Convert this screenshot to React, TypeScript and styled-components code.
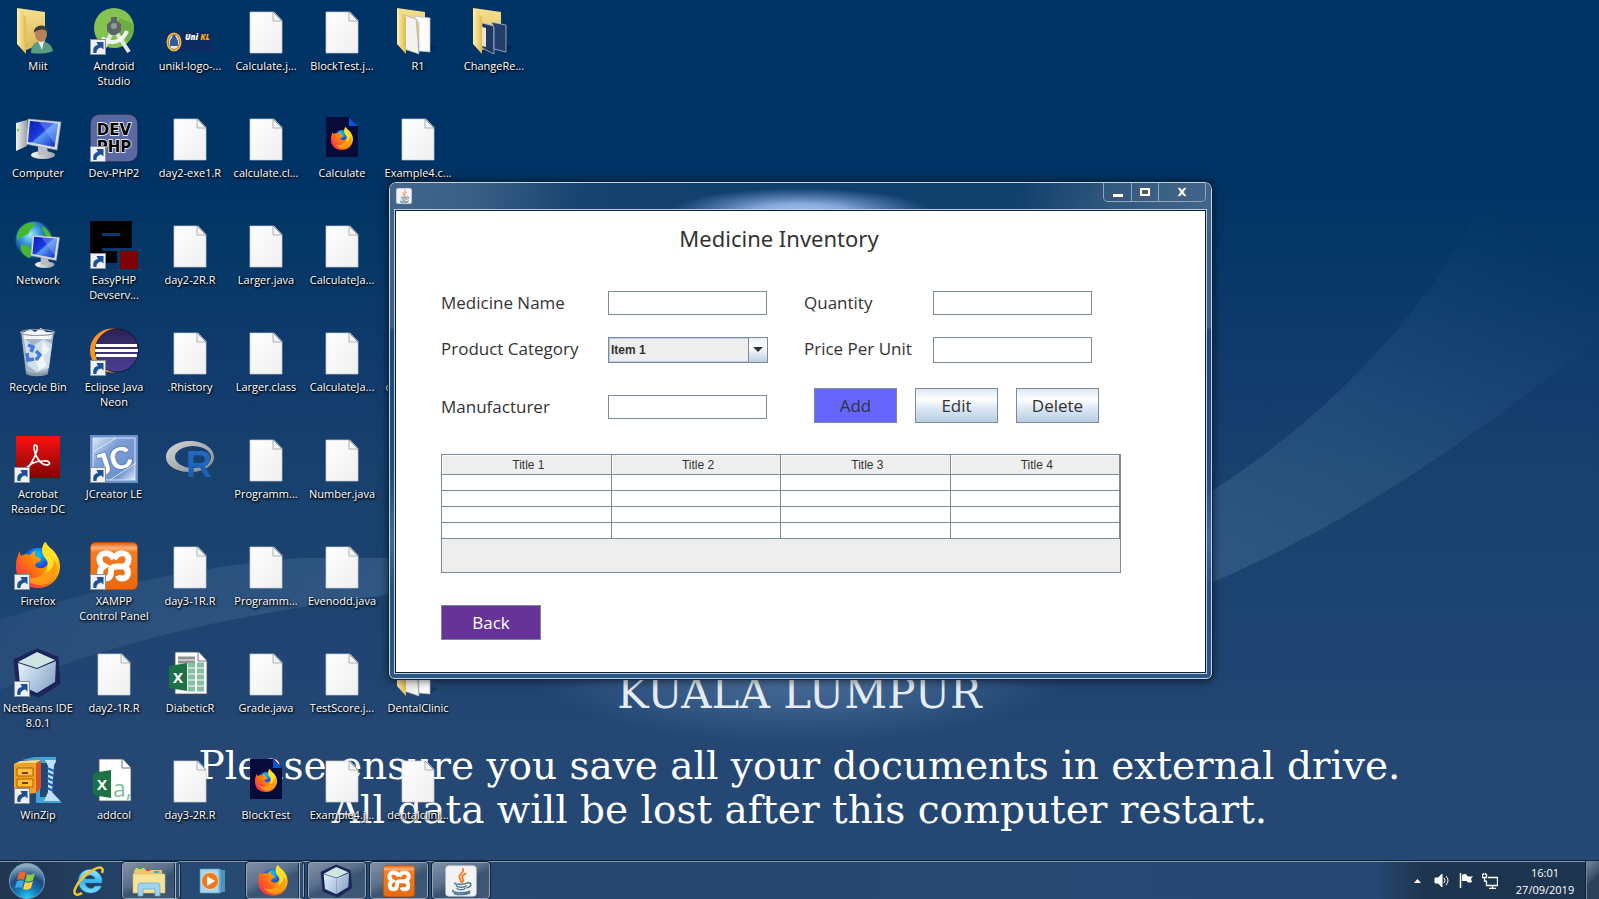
import React from "react";
import styled, { createGlobalStyle, css } from "styled-components";

const UI = `"Open Sans", "Noto Sans", sans-serif`;
const SWING = `"Liberation Sans", Arial, sans-serif`;
const EDGE = "#7a8a99";

const GlobalStyle = createGlobalStyle`
  *, *::before, *::after { box-sizing: border-box; }
  body { margin: 0; background: #003366; }
  button, input, select { font: inherit; margin: 0; }
`;

/* ---------- desktop ---------- */

const Screen = styled.div`
  display: flex;
  flex-direction: column;
  height: 100vh;
  overflow: hidden;
  font-family: ${UI};
`;

const Desktop = styled.main`
  position: relative;
  flex: 1;
  min-height: 0;
  background: linear-gradient(#003366 0%, #003365 21%, #063867 30%, #133c6e 45%, #18416e 55%, #1e4471 72%, #254774 88%, #254774 100%);
`;

const WallpaperArt = styled.svg`
  position: absolute;
  inset: 0;
  width: 100%;
  height: 100%;
`;

const WallpaperText = styled.div`
  position: absolute;
  inset: 0;
  display: flex;
  flex-direction: column;
  justify-content: flex-end;
  align-items: center;
  padding-bottom: 28px;
  color: #fff;
  font-family: "DejaVu Serif", "Liberation Serif", serif;
  font-size: 39px;
  line-height: 44px;
  white-space: nowrap;
`;

const City = styled.p`
  margin: 0 0 28px;
  color: #e4edf6;
  font-size: 42px;
`;

const Notice = styled.p`
  margin: 0;
`;

const IconColumns = styled.div`
  position: relative;
  display: flex;
`;

const IconColumn = styled.ul`
  display: flex;
  flex-direction: column;
  width: 76px;
  margin: 0;
  padding: 0;
  list-style: none;
`;

const IconCell = styled.li`
  height: 107px;
  padding-top: 7px;
`;

const Shortcut = styled.button`
  display: flex;
  flex-direction: column;
  align-items: center;
  gap: 3px;
  width: 100%;
  padding: 0;
  border: 0;
  background: none;
  color: #fff;
  font-size: 11px;
  line-height: 15px;
  white-space: pre;
  text-shadow: 1px 1px 2px #000, 0 1px 3px #000;
`;

const Glyph = styled.svg<{ $size?: number }>`
  display: block;
  flex: none;
  width: ${(p) => p.$size ?? 48}px;
  height: ${(p) => p.$size ?? 48}px;
  overflow: visible;
`;

/* ---------- application window ---------- */

const WindowLayer = styled.div`
  position: absolute;
  inset: 0;
  display: flex;
  justify-content: center;
  align-items: center;
  padding: 1px 0 0 2px;
  pointer-events: none;
`;

const Frame = styled.section`
  width: 823px;
  max-width: 100%;
  padding: 0 5px 5px;
  border: 1px solid #c3d2e0;
  border-radius: 7px 7px 5px 5px;
  outline: 1px solid #10243c;
  outline-offset: 0;
  background: linear-gradient(#42668b 0%, #3b6088 29%, #1c477a 30%, #234f80 60%, #3c6b9c 72%, #27517f 82%, #2b5685 100%);
  box-shadow: 0 1px 10px 1px rgba(0, 0, 0, 0.6);
  pointer-events: auto;
`;

const TitleBar = styled.header`
  display: flex;
  justify-content: space-between;
  align-items: flex-start;
  height: 27px;
  margin: 0 -5px;
  padding: 0 5px 0 6px;
  border-radius: 6px 6px 0 0;
  background:
    radial-gradient(ellipse 130px 24px at 50% 29px, #a5c4ef 0%, #86a9da 35%, #4a73a6 65%, transparent 100%),
    linear-gradient(100deg, #42668b 0%, #3a5f86 10%, #16426f 24%, #0f3f6d 50%, #11406d 76%, #31587f 88%, #42668b 100%);
`;

const JavaBadge = styled.span`
  display: block;
  margin-top: 5px;
`;

const CaptionButtons = styled.div`
  display: flex;
  height: 19px;
  border: 1px solid #8fa6bc;
  border-top: 0;
  border-radius: 0 0 5px 5px;
`;

const CaptionButton = styled.button<{ $wide?: boolean }>`
  display: flex;
  justify-content: center;
  align-items: center;
  width: ${(p) => (p.$wide ? 47 : 27)}px;
  padding: 0;
  border: 0;
  background: #3d628838;
  & + & {
    border-left: 1px solid #8fa6bc;
  }
`;

const Panel = styled.div`
  padding: 12px 45px 32px;
  border: 1px solid #0d2138;
  outline: 1px solid #b9cbdc;
  background: #fff;
  color: #333;
`;

const Heading = styled.h1`
  margin: 0 43px 38px 0;
  font-family: "Noto Sans", ${UI};
  font-size: 22px;
  font-weight: 400;
  line-height: 30px;
  text-align: center;
`;

const Form = styled.form`
  display: grid;
  grid-template-columns: 167px 160px 36px 129px 159px;
  grid-template-rows: 46px 51px 35px;
  align-items: start;
  font-size: 17px;
`;

const lowered = css`
  align-self: center;
  margin-top: 4px;
`;

const Label = styled.label<{ $right?: boolean; $lowered?: boolean }>`
  grid-column: ${(p) => (p.$right ? 4 : 1)};
  line-height: 24px;
  ${(p) => p.$lowered && lowered}
`;

const control = css`
  width: 159px;
  height: 24px;
  border: 1px solid ${EDGE};
  border-radius: 0;
  background: #fff;
  color: #333;
`;

const TextBox = styled.input<{ $right?: boolean; $tall?: boolean; $lowered?: boolean }>`
  ${control}
  grid-column: ${(p) => (p.$right ? 5 : 2)};
  height: ${(p) => (p.$tall ? 26 : 24)}px;
  padding: 0 4px;
  font-size: 12px;
  ${(p) => p.$lowered && lowered}
`;

const Combo = styled.div`
  position: relative;
  grid-column: 2;
`;

const ComboSelect = styled.select`
  ${control}
  display: block;
  appearance: none;
  width: 160px;
  height: 26px;
  padding: 0 20px 0 2px;
  background: #eee;
  box-shadow: inset 0 0 0 1px #b8cfe5;
  font-family: ${SWING};
  font-size: 12px;
  font-weight: 700;
`;

const ComboArrow = styled.span`
  position: absolute;
  top: 1px;
  right: 1px;
  bottom: 1px;
  display: flex;
  justify-content: center;
  align-items: center;
  width: 19px;
  border-left: 1px solid ${EDGE};
  background: linear-gradient(#e8f0f8, #fff 35%, #bdd0e4);
  pointer-events: none;
`;

const Actions = styled.div`
  grid-column: 4 / 6;
  display: flex;
  gap: 18px;
  margin-left: 10px;
`;

const tones = {
  plain: "background: linear-gradient(#dde8f3, #fff 32%, #dde8f3 58%, #b8cfe5); color: #333;",
  add: "background: #6666ff; color: #333;",
  back: "background: #663399; color: #fff;",
};

const PushButton = styled.button<{ $tone: keyof typeof tones; $wide?: boolean }>`
  flex: none;
  width: ${(p) => (p.$wide ? 100 : 83)}px;
  height: 35px;
  padding: 0;
  border: 1px solid ${EDGE};
  font-size: 17px;
  ${(p) => tones[p.$tone]}
`;

const ScrollPane = styled.div`
  width: 680px;
  max-width: 100%;
  margin: 31px 0 32px;
  padding-bottom: 33px;
  border: 1px solid ${EDGE};
  background: #eee;
`;

const Table = styled.table`
  width: 100%;
  border-collapse: collapse;
  table-layout: fixed;
  font-family: ${SWING};
  font-size: 12px;
  line-height: 16px;
`;

const HeadCell = styled.th`
  height: 20px;
  padding: 0 0 0 4px;
  border-right: 1px solid ${EDGE};
  border-bottom: 1px solid ${EDGE};
  background: #eee;
  box-shadow: inset 1px 1px 0 #fff;
  font-weight: 400;
`;

const Cell = styled.td`
  height: 16px;
  padding: 0;
  border-right: 1px solid ${EDGE};
  border-bottom: 1px solid ${EDGE};
  background: #fff;
`;

/* ---------- taskbar ---------- */

const Taskbar = styled.footer`
  position: relative;
  display: flex;
  flex: none;
  height: 39px;
  border-top: 1px solid #10213a;
  box-shadow: inset 0 1px 0 #8396ad;
  background: linear-gradient(90deg, #21364f 0, #223b59 60px, #264a73 180px, #27496f 540px, #264873 75%, #264873 86%, #1e3550 89%, #1e3550 100%);
`;

const StartButton = styled.button`
  display: flex;
  justify-content: center;
  align-items: center;
  width: 54px;
  margin-right: 6px;
  padding: 2px 0 0;
  border: 0;
  background: none;
`;

const Tasks = styled.nav`
  display: flex;
  gap: 4px;
  padding-top: 1px;
`;

const TaskButton = styled.button<{ $open?: boolean; $stack?: boolean }>`
  position: relative;
  display: flex;
  justify-content: center;
  align-items: center;
  width: 58px;
  padding: 0 ${(p) => (p.$stack ? 5 : 0)}px 0 0;
  border: 1px solid transparent;
  background: none;
  ${(p) =>
    p.$open &&
    css`
      border-color: #93a3b6;
      border-radius: 3px;
      outline: 1px solid #14243a;
      outline-offset: 0;
      background: linear-gradient(155deg, #8090a6 0%, #5c708c 40%, #3a5574 55%, #40597a 100%);
    `}
  ${(p) =>
    p.$stack &&
    css`
      &::after {
        content: "";
        position: absolute;
        top: 0;
        right: 0;
        bottom: 0;
        width: 4px;
        border-left: 1px solid #a9b6c6;
        box-shadow: -1px 0 0 #1b2c43;
        background: #2b4a6e;
      }
    `}
`;

const Tray = styled.div`
  display: flex;
  align-items: center;
  margin-left: auto;
  padding-top: 1px;
  color: #fff;
`;

const TrayButton = styled.button<{ $width: number }>`
  display: flex;
  justify-content: center;
  width: ${(p) => p.$width}px;
  padding: 0;
  border: 0;
  background: none;
`;

const Clock = styled.time`
  width: 84px;
  padding-left: 2px;
  font-size: 11px;
  line-height: 17px;
  text-align: center;
  white-space: pre-line;
`;

const ShowDesktop = styled.button`
  align-self: stretch;
  width: 13px;
  padding: 0;
  border: 1px solid #6f8297;
  border-width: 0 0 0 1px;
  outline: 1px solid #12233a;
  background: linear-gradient(135deg, #7488a0, #3a506b 45%, #2b415c 50%, #2b415c);
`;

/* ---------- drawings ---------- */

const Gradients = () => (
  <svg width="0" height="0" style={{ position: "absolute" }} aria-hidden="true">
    <defs>
      <linearGradient id="paper" x2="1" y2="1"><stop stopColor="#fff" /><stop offset="1" stopColor="#efefef" /></linearGradient>
      <linearGradient id="folder" x2="1"><stop stopColor="#fff3b0" /><stop offset="1" stopColor="#e0b950" /></linearGradient>
      <linearGradient id="folderBack" x2="0" y2="1"><stop stopColor="#f6e08c" /><stop offset="1" stopColor="#d9b65a" /></linearGradient>
      <linearGradient id="screen" x2="1" y2="1"><stop stopColor="#0b1cb8" /><stop offset=".45" stopColor="#1c3be0" /><stop offset=".5" stopColor="#5b9af5" /><stop offset="1" stopColor="#0a22c0" /></linearGradient>
      <linearGradient id="silver" x2="1"><stop stopColor="#f4f4f4" /><stop offset="1" stopColor="#9aa0a8" /></linearGradient>
      <radialGradient id="globe" cx=".4" cy=".35"><stop stopColor="#a8e8ff" /><stop offset=".5" stopColor="#3a9fdc" /><stop offset="1" stopColor="#124f95" /></radialGradient>
      <linearGradient id="acro" x2="0" y2="1"><stop stopColor="#ff1010" /><stop offset="1" stopColor="#7d0505" /></linearGradient>
      <linearGradient id="fox" x1="1" y1="0" x2="0" y2="1"><stop stopColor="#fff44f" /><stop offset=".35" stopColor="#ffb000" /><stop offset=".6" stopColor="#ff7010" /><stop offset="1" stopColor="#f5156c" /></linearGradient>
      <radialGradient id="foxGlobe" cx=".5" cy=".2"><stop stopColor="#00c8ff" /><stop offset=".5" stopColor="#0f70f0" /><stop offset="1" stopColor="#2a2aa0" /></radialGradient>
      <linearGradient id="eclipse" x2="0" y2="1"><stop stopColor="#2c2255" /><stop offset="1" stopColor="#4b3f96" /></linearGradient>
      <linearGradient id="ring" x2="1" y2="1"><stop stopColor="#d5d7da" /><stop offset="1" stopColor="#85888d" /></linearGradient>
      <linearGradient id="rBlue" x2="0" y2="1"><stop stopColor="#276dc3" /><stop offset="1" stopColor="#1a5cb0" /></linearGradient>
      <linearGradient id="cubeL" x2="1" y2="1"><stop stopColor="#eaf2fb" /><stop offset="1" stopColor="#9fbbd9" /></linearGradient>
      <linearGradient id="cubeR" x2="1" y2="1"><stop stopColor="#c9d9ea" /><stop offset="1" stopColor="#7d9cc0" /></linearGradient>
      <linearGradient id="orange" x2="0" y2="1"><stop stopColor="#d45d10" /><stop offset=".12" stopColor="#ffb27a" /><stop offset=".2" stopColor="#f57c22" /><stop offset="1" stopColor="#e8690f" /></linearGradient>
      <linearGradient id="jc" x2="1" y2="1"><stop stopColor="#dfe9f7" /><stop offset=".35" stopColor="#7d9fd4" /><stop offset=".75" stopColor="#6e93cd" /><stop offset="1" stopColor="#e4ecf8" /></linearGradient>
      <radialGradient id="orb" cx=".5" cy="1" r=".95"><stop stopColor="#25d5ff" /><stop offset=".35" stopColor="#1478b8" /><stop offset=".65" stopColor="#1b4a7a" /><stop offset="1" stopColor="#8fb0c8" /></radialGradient>
      <linearGradient id="ie" x2="0" y2="1"><stop stopColor="#a5ecff" /><stop offset=".5" stopColor="#38b5f2" /><stop offset="1" stopColor="#7be0ff" /></linearGradient>
    </defs>
  </svg>
);

const ShortcutArrow = () => (
  <g>
    <rect x=".5" y="32.500" width="15" height="15" fill="#eef2f7" stroke="#8b8f96" />
    <path d="M3.500 46C2.500 41 4.500 38.500 8 38l-1.500-3h7v7.500l-2.200-2C8.500 41 6.500 42.500 6.500 46Z" fill="#1d5096" />
  </g>
);

const FilePage = () => (
  <g>
    <path d="M8 5h24l8 8.500V46H8Z" fill="url(#paper)" stroke="#c9ccd0" strokeWidth=".7" />
    <path d="M31 5v9h9" fill="#f4f4f4" stroke="#a6a9ad" strokeWidth=".9" />
    <path d="M31 5l9 9" stroke="#8e9297" strokeWidth=".9" />
  </g>
);

const Fox = () => (
  <g>
    <circle cx="24" cy="23" r="17" fill="url(#foxGlobe)" />
    <path d="M6 9c0 2 0 3 1 5 3-2 6-2 9-1 3-4 5-4 6-4-2 3-1 5 1 6 3 1 4 2 4 3-1 2-5 2-6 5 1 4 7 4 10 2 6-4 5-14-1-18-1-3 0-6 2-7 1 6 14 10 14 24 0 12-9 22-22 22C10 46 1 37 2 23c0-6 2-10 4-14Z" fill="url(#fox)" />
    <path d="M31 0c-4 5-4 11 0 16 4 4 4 11-1 15 12-1 15-11 11-20-2-4-8-6-10-11Z" fill="#ffe226" />
    <path d="M30 31c6-1 10-6 10-14 6 10 2 21-8 25-9 3-18-1-21-8 6 4 13 2 19-3Z" fill="#ff9a12" />
  </g>
);

const Cube = () => (
  <g>
    <path d="M23 1l20 8 2 25-20 13L4 39 1 11Z" fill="#1c2459" stroke="#1c2459" strokeWidth="3" strokeLinejoin="round" />
    <path d="M23 3l18 8-18 8L4 13Z" fill="#cfe5e2" />
    <path d="M4 14l19 6v24L6 36Z" fill="url(#cubeL)" />
    <path d="M42 12l-19 8v24l18-11Z" fill="url(#cubeR)" />
  </g>
);

const Xampp = () => (
  <g>
    <rect x=".5" y=".5" width="47" height="47" rx="5" fill="url(#orange)" stroke="#b9500c" />
    <path d="M24 17C20 9 9.500 10 9.500 17C9.500 21 12 23 14 24C8.500 27 8.500 36.500 16 36.500C21 36.500 21 32 21 29C21 25.500 23 24.500 27 24.500H33M24 17C28 9 38.500 10 38.500 17C38.500 21 36 23.500 34 24.500C39.500 27 39.500 36.500 32 36.500C29.500 36.500 28.500 35 28 33.500" fill="none" stroke="#fff" strokeWidth="6" />
  </g>
);

const JavaCup = () => (
  <g fill="none" strokeLinecap="round">
    <rect x="1" y="1" width="46" height="46" rx="5" fill="#f3f3f4" stroke="#c8ccd0" />
    <path d="M27 6c3 6-9 8-5 14 1 2 2 3 2 5M31 13c-5 2-7 5-4 8 1 2 0 4-1 5" stroke="#ee7d22" strokeWidth="2.600" />
    <path d="M15 27c-4 2 14 3 18 0M17 31c2 3 12 3 15 0M18 35c2 3 10 3 12 0M34 27c7-2 6 6-1 7M12 38c-5 4 22 5 25 1M14 43c8 2 18 1 23-1" stroke="#4f7697" strokeWidth="2.200" />
  </g>
);

const FolderShape = ({ children }: { children?: React.ReactNode }) => (
  <g>
    <path d="M34 36l10 4-8 5Z" fill="#000" opacity=".2" />
    <path d="M3 1l28 4v30L10 44Z" fill="url(#folderBack)" />
    {children}
    <path d="M3 1l9 9v37L3 37Z" fill="url(#folder)" />
  </g>
);

const Monitor = () => (
  <g>
    <ellipse cx="29" cy="41" rx="12" ry="4" fill="url(#silver)" />
    <path d="M24 32h9l1 9h-10Z" fill="#b9bec5" />
    <path d="M14 5l33 3-4 28-31-6Z" fill="#d7dce3" stroke="#9aa2ad" strokeWidth=".6" />
    <path d="M16 7l28 2.500-3.500 23.500L14 28Z" fill="url(#screen)" />
    <path d="M25 8l19 1.500-3 20Z" fill="#9cc4ff" opacity=".35" />
  </g>
);

const Excel = ({ csv }: { csv?: boolean }) => (
  <g>
    <path d="M9 3h24l8 9v33H9Z" fill="#fff" stroke="#4e5257" strokeWidth=".8" />
    <path d="M32 3v9h9" fill="#fff" stroke="#4e5257" strokeWidth=".8" />
    {csv ? (
      <text x="23" y="41" fill="#86bf9f" fontSize="23" fontFamily="Open Sans, sans-serif" style={{ textShadow: "none" }}>a,</text>
    ) : (
      <path d="M12 9h17M12 13h17" stroke="#8d8d8d" strokeWidth="3" />
    )}
    {!csv && <path d="M22 16h16M22 22h16M22 28h16M22 34h16M22 40h16" stroke="#86bf9f" strokeWidth="5" strokeDasharray="7 2" />}
    <path d="M3 17l18-3v28L3 39Z" fill="#1e7145" />
    <text x="12" y="34" textAnchor="middle" fill="#fff" fontSize="15" fontWeight="700" fontFamily="Open Sans, sans-serif" style={{ textShadow: "none" }}>X</text>
  </g>
);

const drawings: Record<string, React.ReactNode> = {
  file: <FilePage />,
  user: (
    <g>
      <FolderShape />
      <path d="M17 46c0-9 4-11 10-12 7 1 11 4 12 10-5 3-16 3-22 2Z" fill="#5a9c80" />
      <path d="M24 34l4 9 2-9Z" fill="#eef3f1" />
      <ellipse cx="27" cy="27" rx="6" ry="8" fill="#b9835a" />
      <path d="M20 26c-1-9 14-11 14 0-2-4-9-5-14 0Z" fill="#3a3a3a" />
    </g>
  ),
  android: (
    <g>
      <circle cx="24" cy="21" r="20" fill="#85c250" />
      <path d="M24 21l14 14a20 20 0 0 0 5-18L30 11Z" fill="#5f9c3c" opacity=".6" />
      <path d="M22 25L12 45M26 25l13 20" stroke="#e6e6e6" strokeWidth="4" />
      <path d="M12 31c8 7 20 5 25-7" fill="none" stroke="#f2f2f2" strokeWidth="4" />
      <path d="M21 10h6v4l4 3v7l-5 4h-5l-4-4v-7l4-3Z" fill="#5d6468" />
      <circle cx="24" cy="19" r="3" fill="#8aa093" />
    </g>
  ),
  unikl: (
    <g>
      <rect x="2" y="25" width="44" height="20" fill="#0c2b60" />
      <ellipse cx="8" cy="35" rx="7.500" ry="9.500" fill="#f0b93a" />
      <ellipse cx="8" cy="35" rx="5.500" ry="7.500" fill="#dfe8ee" stroke="#b4552a" strokeWidth=".8" />
      <path d="M4 39v-5l3-6 2 0 3 6v5Z" fill="#2f5c94" />
      <text x="19" y="33" fontSize="8" fontWeight="800" fontStyle="italic" fontFamily="Open Sans, sans-serif" fill="#fff" style={{ textShadow: "none" }}>Uni <tspan fill="#f6a800">KL</tspan></text>
    </g>
  ),
  files: (
    <FolderShape>
      <path d="M10 8l12 4 3 35-15-5Z" fill="#f3f3f3" stroke="#aaa" strokeWidth=".7" />
      <path d="M20 9l16 2v34l-11-1V16Z" fill="#fdfdfd" stroke="#bbb" strokeWidth=".7" />
    </FolderShape>
  ),
  darkFiles: (
    <FolderShape>
      <path d="M12 16l12 3v28l-12-6Z" fill="#1d3862" stroke="#c4ccd6" strokeWidth=".7" />
      <path d="M12 20l4 1v19l-4-1Z" fill="#e9e3cf" />
      <path d="M21 15l15 3v27l-12-3V20Z" fill="#243e6c" stroke="#c4ccd6" strokeWidth=".7" />
    </FolderShape>
  ),
  computer: (
    <g>
      <path d="M2 9l11-3v26L2 37Z" fill="url(#silver)" />
      <circle cx="4" cy="16" r="1.200" fill="#54e234" />
      <Monitor />
    </g>
  ),
  devphp: (
    <g fontFamily="DejaVu Sans, sans-serif" fontWeight="700" fontSize="15" fill="#000" stroke="#fff" strokeWidth="1.500" style={{ paintOrder: "stroke", textShadow: "none" }} textAnchor="middle">
      <rect x=".5" y=".5" width="47" height="47" rx="9" fill="#5a68a4" stroke="#10131f" strokeWidth="1" />
      <text x="24" y="21">DEV</text>
      <text x="24" y="38">PHP</text>
    </g>
  ),
  foxPage: (
    <g>
      <path d="M8 3h24l8 9v31H8Z" fill="#060b3a" />
      <path d="M31 3v9h9Z" fill="#0a53d8" />
      <g transform="translate(12 13) scale(.5)"><Fox /></g>
    </g>
  ),
  network: (
    <g>
      <circle cx="20" cy="19" r="18.500" fill="url(#globe)" />
      <path d="M6 8c6-7 13-7 15-5-1 5-5 4-6 9-2 3-7 2-12 7 0-4 1-8 3-11ZM7 24c5-1 10 2 12 8-1 4-3 4-4 5C9 34 5 29 7 24ZM28 5c6 3 9 8 10 13-5-1-9-5-10-13Z" fill="#46b82f" />
      <g transform="translate(7 10) scale(.82)"><Monitor /></g>
    </g>
  ),
  easyphp: (
    <g>
      <path d="M0 0h42v27H12v3h15v12H0Z" fill="#000" />
      <rect x="12" y="12" width="18" height="3" fill="#0b3a6b" />
      <rect x="30" y="30" width="18" height="18" fill="#7f0000" />
    </g>
  ),
  bin: (
    <g>
      <path d="M7 4l5 41c6 3 16 3 22 0l6-41Z" fill="#b4c3d3" opacity=".9" />
      <path d="M9 5l7-4 5 3 6-4 5 4 7 1-2 6H10Z" fill="#f5f8fb" />
      <path d="M10 10l9 8 10-7 9 5-3 24-12 4-9-6Z" fill="#dfe8f1" opacity=".8" />
      <path d="M29 13l7 9-7 6 4 10-8 4-3-9 5-6Z" fill="#f7fafc" opacity=".8" />
      <path d="M14 17l5 2-2 5M13 25l1 7 6-1M22 32l4-5-4-4" fill="none" stroke="#3f7be0" strokeWidth="3.500" />
      <ellipse cx="23.500" cy="4.500" rx="17" ry="3" fill="none" stroke="#8e9aa8" strokeWidth="1.200" />
      <path d="M12 43c7 3 15 3 22 0v3c-6 3-16 3-22 0Z" fill="#8d98a5" />
    </g>
  ),
  eclipse: (
    <g>
      <circle cx="22" cy="22.500" r="22" fill="#f7941e" />
      <circle cx="27" cy="22.500" r="21.500" fill="url(#eclipse)" stroke="#1b1433" />
      <path d="M6 17.500h41M5 22.500h43M6 27.500h41" stroke="#fff" strokeWidth="2.800" />
    </g>
  ),
  acrobat: (
    <g>
      <rect x="2" y="1" width="44" height="42" fill="url(#acro)" />
      <path d="M11 35c4-2 10-12 12-20 1-6-4-7-3-1 1 7 6 15 12 16 6 0 4-5-3-4-7 0-14 3-18 9Z" fill="none" stroke="#fff" strokeWidth="1.700" />
    </g>
  ),
  jcreator: (
    <g>
      <rect width="48" height="48" fill="#6b90cb" />
      <rect x="3" y="3" width="42" height="42" fill="url(#jc)" stroke="#dce6f5" strokeWidth="1" />
      <path d="M3 17L26 3M20 45l26-17" stroke="#fff" strokeWidth="1" opacity=".7" />
      <text x="22" y="36" textAnchor="middle" transform="rotate(-18 24 24)" fontFamily="Liberation Sans Narrow, Liberation Sans, sans-serif" fontWeight="700" fontSize="31" fill="#fff" stroke="#4d74b5" strokeWidth="1.500" style={{ paintOrder: "stroke", textShadow: "none" }}>JC</text>
    </g>
  ),
  rlang: (
    <g>
      <path fillRule="evenodd" d="M24 6c13 0 24 7 24 16s-11 15-24 15S0 31 0 22 11 6 24 6Zm3 5C17 11 9 16 9 22s8 11 18 11 18-5 18-11-8-11-18-11Z" fill="url(#ring)" />
      <text x="33" y="42" textAnchor="middle" fontFamily="Liberation Sans, sans-serif" fontWeight="700" fontSize="36" fill="url(#rBlue)" style={{ textShadow: "none" }}>R</text>
    </g>
  ),
  firefox: <Fox />,
  xampp: <Xampp />,
  netbeans: <Cube />,
  excel: <Excel />,
  csv: <Excel csv />,
  winzip: (
    <g>
      <path d="M8 4l12-3h22v6H26v34h17l5 6H22V6Z" fill="#3fa4dc" />
      <path d="M31 4h11l-2 6-2 26 8 9H30l4-9V10Z" fill="#bfe0f7" />
      <path d="M33 12l7 3M33 17l7 3M33 22l7 3M33 27l7 3M33 32l7 3" stroke="#1c5fb0" strokeWidth="2" />
      <path d="M0 8l22-1v30l-22 2Z" fill="#f4a223" />
      <path d="M22 7l5-3v28l-5 5Z" fill="#d9532a" />
      <path d="M0 8l6-3 21-1-5 3Z" fill="#ffd673" />
      <path d="M3 12h16v8H3ZM3 23h16v8H3Z" fill="#ffbf3c" stroke="#a85c00" />
      <path d="M8 17h6M8 27h6" stroke="#6b3f00" strokeWidth="2" />
    </g>
  ),
};

/* ---------- data ---------- */

type Item = { icon: string; label: string; link?: boolean } | null;

const file = (label: string): Item => ({ icon: "file", label });
const app = (icon: string, label: string): Item => ({ icon, label, link: true });
const item = (icon: string, label: string): Item => ({ icon, label });

const columns: Item[][] = [
  [item("user", "Miit"), item("computer", "Computer"), item("network", "Network"), item("bin", "Recycle Bin"), app("acrobat", "Acrobat\nReader DC"), app("firefox", "Firefox"), app("netbeans", "NetBeans IDE\n8.0.1"), app("winzip", "WinZip")],
  [app("android", "Android\nStudio"), app("devphp", "Dev-PHP2"), app("easyphp", "EasyPHP\nDevserv..."), app("eclipse", "Eclipse Java\nNeon"), app("jcreator", "JCreator LE"), app("xampp", "XAMPP\nControl Panel"), file("day2-1R.R"), item("csv", "addcol")],
  [item("unikl", "unikl-logo-..."), file("day2-exe1.R"), file("day2-2R.R"), file(".Rhistory"), item("rlang", ""), file("day3-1R.R"), item("excel", "DiabeticR"), file("day3-2R.R")],
  [file("Calculate.j..."), file("calculate.cl..."), file("Larger.java"), file("Larger.class"), file("Programm..."), file("Programm..."), file("Grade.java"), item("foxPage", "BlockTest")],
  [file("BlockTest.j..."), item("foxPage", "Calculate"), file("CalculateJa..."), file("CalculateJa..."), file("Number.java"), file("Evenodd.java"), file("TestScore.j..."), file("Example4.j...")],
  [item("files", "R1"), file("Example4.c..."), null, file("calculate.cl..."), null, item("files", "Laboratory"), item("files", "DentalClinic"), file("dentalclini...")],
  [item("darkFiles", "ChangeRe...")],
];

const headers = ["Title 1", "Title 2", "Title 3", "Title 4"];
const rows = [0, 1, 2, 3];

const DesktopIcon = ({ entry }: { entry: Item }) => (
  <IconCell>
    {entry && (
      <Shortcut type="button" aria-label={entry.label || "R"}>
        <Glyph viewBox="0 0 48 48">
          {drawings[entry.icon]}
          {entry.link && <ShortcutArrow />}
        </Glyph>
        {entry.label}
      </Shortcut>
    )}
  </IconCell>
);

const MedicineWindow = () => (
  <Frame aria-label="Medicine Inventory">
    <TitleBar>
      <JavaBadge>
        <Glyph $size={16} viewBox="0 0 48 48"><JavaCup /></Glyph>
      </JavaBadge>
      <CaptionButtons>
        <CaptionButton type="button" aria-label="Minimize">
          <svg width="12" height="14"><rect x=".5" y="8.500" width="11" height="4" fill="#fff" stroke="#555" /></svg>
        </CaptionButton>
        <CaptionButton type="button" aria-label="Maximize">
          <svg width="12" height="10"><path fillRule="evenodd" d="M.5.5h11v9H.5ZM3.500 3.500v3h5v-3Z" fill="#fff" stroke="#555" /></svg>
        </CaptionButton>
        <CaptionButton type="button" aria-label="Close" $wide>
          <svg width="12" height="10"><path d="M1 .5h3L6 2.800 8 .5h3L7.800 5 11 9.500H8L6 7.200 4 9.500H1L4.200 5Z" fill="#fff" stroke="#555" strokeWidth=".7" /></svg>
        </CaptionButton>
      </CaptionButtons>
    </TitleBar>
    <Panel>
      <Heading>Medicine Inventory</Heading>
      <Form onSubmit={(e) => e.preventDefault()}>
        <Label htmlFor="name">Medicine Name</Label>
        <TextBox id="name" />
        <Label htmlFor="quantity" $right>Quantity</Label>
        <TextBox id="quantity" $right />

        <Label htmlFor="category">Product Category</Label>
        <Combo>
          <ComboSelect id="category"><option>Item 1</option></ComboSelect>
          <ComboArrow>
            <svg width="10" height="5"><path d="M0 0h10L5 5Z" fill="#333" /></svg>
          </ComboArrow>
        </Combo>
        <Label htmlFor="price" $right>Price Per Unit</Label>
        <TextBox id="price" $right $tall />

        <Label htmlFor="manufacturer" $lowered>Manufacturer</Label>
        <TextBox id="manufacturer" $lowered />
        <Actions>
          <PushButton type="button" $tone="add">Add</PushButton>
          <PushButton type="button" $tone="plain">Edit</PushButton>
          <PushButton type="button" $tone="plain">Delete</PushButton>
        </Actions>
      </Form>
      <ScrollPane>
        <Table>
          <thead>
            <tr>{headers.map((h) => <HeadCell key={h} scope="col">{h}</HeadCell>)}</tr>
          </thead>
          <tbody>
            {rows.map((r) => <tr key={r}>{headers.map((h) => <Cell key={h} />)}</tr>)}
          </tbody>
        </Table>
      </ScrollPane>
      <PushButton type="button" $tone="back" $wide>Back</PushButton>
    </Panel>
  </Frame>
);

const TaskIcon = ({ children, box = "0 0 48 48" }: { children: React.ReactNode; box?: string }) => (
  <Glyph $size={32} viewBox={box}>{children}</Glyph>
);

export default function App() {
  return (
    <Screen>
      <GlobalStyle />
      <Gradients />
      <Desktop>
        <WallpaperArt viewBox="0 0 1599 860" preserveAspectRatio="none" aria-hidden="true">
          <defs>
            <linearGradient id="swoosh" x1="0" y1="1" x2="1" y2="0">
              <stop stopColor="#7fa0c4" stopOpacity=".26" /><stop offset=".45" stopColor="#5f95b4" stopOpacity=".17" /><stop offset=".85" stopColor="#4a80c0" stopOpacity="0" />
            </linearGradient>
            <linearGradient id="swooshLeft"><stop stopColor="#6f97c4" stopOpacity=".1" /><stop offset="1" stopColor="#7b9cc2" stopOpacity=".3" /></linearGradient>
            <radialGradient id="glow"><stop stopColor="#8fb4e2" stopOpacity=".5" /><stop offset=".6" stopColor="#7597c0" stopOpacity=".25" /><stop offset="1" stopColor="#5f86b5" stopOpacity="0" /></radialGradient>
          </defs>
          <path d="M1100 553C1280 470 1440 320 1500 160L1599 160V339C1480 430 1330 550 1100 625Z" fill="url(#swoosh)" />
          <path d="M0 620Q150 570 300 558L600 558V575Q200 600 0 690Z" fill="url(#swooshLeft)" />
          <ellipse cx="800" cy="660" rx="280" ry="85" fill="url(#glow)" />
        </WallpaperArt>
        <WallpaperText>
          <City>KUALA LUMPUR</City>
          <Notice>Please ensure you save all your documents in external drive.</Notice>
          <Notice>All data will be lost after this computer restart.</Notice>
        </WallpaperText>
        <IconColumns>
          {columns.map((col, c) => (
            <IconColumn key={c}>
              {col.map((entry, r) => <DesktopIcon key={r} entry={entry} />)}
            </IconColumn>
          ))}
        </IconColumns>
        <WindowLayer>
          <MedicineWindow />
        </WindowLayer>
      </Desktop>
      <Taskbar>
        <StartButton type="button" aria-label="Start">
          <Glyph $size={36} viewBox="0 0 36 36">
            <circle cx="18" cy="18" r="17.500" fill="url(#orb)" stroke="#6ea3c4" />
            <path d="M10 10c3-2 5-1 7 0l-2 7c-2-1-4-1-7 0Z" fill="#f0652a" />
            <path d="M18 11c3 1 5 1 8-1l-2 7c-3 2-5 2-8 1Z" fill="#8ccb3f" />
            <path d="M8 18c3-1 5-1 7 0l-2 7c-2-1-4-1-7 0Z" fill="#3fa3e8" />
            <path d="M16 19c3 1 5 1 8-1l-2 7c-3 2-5 2-8 1Z" fill="#ffd23a" />
          </Glyph>
        </StartButton>
        <Tasks aria-label="Running programs">
          <TaskButton type="button" aria-label="Internet Explorer">
            <TaskIcon box="0 0 32 32">
              <path d="M29 18H12c1 6 8 7 10 3h6.500c-4 11-23 9-23-5S25 0 29 14Zm-7-4c-1-5-9-5-10 0Z" fill="url(#ie)" stroke="#2184c8" strokeWidth=".5" />
              <path d="M29 8c2-5-1-7-7-4C13 8 5 16 2 24c-2 6 2 7 7 4" fill="none" stroke="#f5c62c" strokeWidth="2.500" />
            </TaskIcon>
          </TaskButton>
          <TaskButton type="button" aria-label="Windows Explorer" $open $stack>
            <TaskIcon box="0 0 32 32">
              <path d="M1 6l2-3h8l2 2h16v21H1Z" fill="#e9c869" />
              <path d="M5 3h4" stroke="#2fae3a" strokeWidth="2" /><path d="M13 5h4" stroke="#d94a3a" strokeWidth="2" /><path d="M21 7h5" stroke="#3fa3e8" strokeWidth="2" />
              <path d="M0 9h32v19H0Z" fill="#f6e39a" stroke="#d9bb62" strokeWidth=".6" />
              <path d="M5 31V21q0-3 3-3h16q3 0 3 3v10h-5v-7H10v7Z" fill="#9fd4ee" stroke="#5ba6cf" strokeWidth=".7" />
            </TaskIcon>
          </TaskButton>
          <TaskButton type="button" aria-label="Media Player">
            <TaskIcon box="0 0 32 32">
              <path d="M11 5h17v22H11Z" fill="#4d93bf" /><path d="M7 4h17v24H7Z" fill="#7bbadb" stroke="#3d82ad" strokeWidth=".6" />
              <path d="M3 4h19v24H3Z" fill="#a8d5ea" stroke="#4d93bf" strokeWidth=".6" />
              <circle cx="13" cy="16" r="8.500" fill="#f27a1a" stroke="#fff" strokeWidth=".5" />
              <path d="M10 11l8 5-8 5Z" fill="#fff" />
            </TaskIcon>
          </TaskButton>
          <TaskButton type="button" aria-label="Firefox" $open $stack><TaskIcon><Fox /></TaskIcon></TaskButton>
          <TaskButton type="button" aria-label="NetBeans" $open><TaskIcon><Cube /></TaskIcon></TaskButton>
          <TaskButton type="button" aria-label="XAMPP" $open><TaskIcon><Xampp /></TaskIcon></TaskButton>
          <TaskButton type="button" aria-label="Java" $open><TaskIcon><JavaCup /></TaskIcon></TaskButton>
        </Tasks>
        <Tray>
          <TrayButton type="button" aria-label="Show hidden icons" $width={25}>
            <svg width="7" height="4"><path d="M3.500 0L7 4H0Z" fill="#fff" /></svg>
          </TrayButton>
          <TrayButton type="button" aria-label="Volume" $width={24}>
            <svg width="16" height="15" fill="none" stroke="#fff"><path d="M1 5h3l4-4v13l-4-4H1Z" fill="#fff" /><path d="M10 5q2 2.500 0 5M12 3q4 4.500 0 9" /></svg>
          </TrayButton>
          <TrayButton type="button" aria-label="Action Center" $width={24}>
            <svg width="15" height="15"><path d="M1.500 0v15" stroke="#fff" strokeWidth="1.500" /><path d="M3 2q3-2 5 0v1q3 1 6 0l-2 3 1 3q-2 1-5 0V8H3Z" fill="#fff" /></svg>
          </TrayButton>
          <TrayButton type="button" aria-label="Network" $width={24}>
            <svg width="16" height="16" fill="none" stroke="#fff"><path d="M6 4.500h9.500v8H4.500V8M7 15.500h7M10.500 13v2M.5 1v3.500h4V1M2.500 4.500V8h2M1.500 0v2M3.500 0v2" strokeWidth="1.300" /></svg>
          </TrayButton>
          <Clock dateTime="2019-09-27T16:01">{"16:01\n27/09/2019"}</Clock>
        </Tray>
        <ShowDesktop type="button" aria-label="Show desktop" />
      </Taskbar>
    </Screen>
  );
}
